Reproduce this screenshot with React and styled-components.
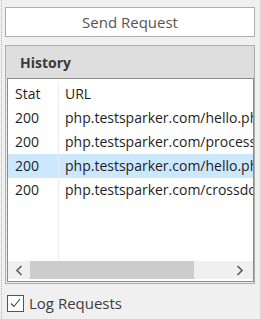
import React from "react";
import styled, { createGlobalStyle } from "styled-components";

const Global = createGlobalStyle`
  html, body { margin: 0; padding: 0; background: #f0f0f0; }
  body { font-family: "Open Sans", "Noto Sans", sans-serif; }
`;

const Frame = styled.div`
  box-sizing: border-box;
  height: 319px;
  border-left: 1px dotted #b8b8b8;
  border-right: 1px solid #d8d8d8;
  margin-left: 1px;
  width: 260px;
  padding: 7px 5px 0 3px;
  display: flex;
  flex-direction: column;
`;

const Button = styled.button`
  box-sizing: border-box;
  height: 30px;
  width: 250px;
  background: #fff;
  border: 1px solid #adadad;
  font-family: inherit;
  font-size: 15px;
  color: #555;
  padding: 0;
  margin: 0;
`;

const Panel = styled.section`
  box-sizing: border-box;
  margin-top: 8px;
  width: 250px;
  height: 239px;
  border: 1px solid #adadad;
  background: #f0f0f0;
  display: flex;
  flex-direction: column;
`;

const PanelHeader = styled.div`
  height: 32px;
  background: #dedede;
  display: flex;
  align-items: center;
  padding-left: 14px;
  font-weight: 700;
  font-size: 14px;
  color: #3a3a3a;
`;

const ListBox = styled.div`
  flex: 1;
  margin: 0 0 1px 1px;
  border: 1px solid #8a8a8a;
  background: #fff;
  display: flex;
  flex-direction: column;
  min-height: 0;
`;

const Body = styled.div`
  flex: 1;
  display: grid;
  grid-template-columns: 50px 1fr;
  padding-top: 3px;
  min-height: 0;
`;

const Column = styled.div`
  display: flex;
  flex-direction: column;
  min-width: 0;
  border-left: ${(p) => (p.$sep ? "1px solid #ececec" : "none")};
`;

const Cell = styled.div`
  height: 24px;
  line-height: 24px;
  padding-left: ${(p) => (p.$sep ? "6px" : "7px")};
  font-size: 14px;
  color: #1e1e1e;
  white-space: nowrap;
  overflow: hidden;
  background: ${(p) => (p.$selected ? "#cce8ff" : "transparent")};
`;

const ScrollBar = styled.div`
  height: 18px;
  margin-bottom: 2px;
  background: #f0f0f0;
  display: flex;
  align-items: center;
`;

const Arrow = styled.div`
  width: 22px;
  height: 18px;
  display: flex;
  align-items: center;
  justify-content: ${(p) => (p.$right ? "flex-start" : "center")};
  padding-left: ${(p) => (p.$right ? "5px" : "0")};
  box-sizing: border-box;
`;

const Track = styled.div`
  flex: 1;
  height: 18px;
  display: flex;
`;

const Thumb = styled.div`
  width: 164px;
  height: 18px;
  background: #cdcdcd;
`;

const Footer = styled.label`
  display: flex;
  align-items: center;
  gap: 5px;
  margin-top: 9px;
  margin-left: 2px;
  font-size: 15px;
  color: #3c3c3c;
`;

const Box = styled.span`
  box-sizing: border-box;
  width: 17px;
  height: 17px;
  border: 1px solid #555;
  background: #fff;
  display: flex;
  align-items: center;
  justify-content: center;
`;

const rows = [
  { s: "200", u: "php.testsparker.com/hello.php" },
  { s: "200", u: "php.testsparker.com/process.php" },
  { s: "200", u: "php.testsparker.com/hello.php", sel: true },
  { s: "200", u: "php.testsparker.com/crossdomain.xml" },
];

export default function App() {
  return (
    <>
      <Global />
      <Frame>
        <Button>Send Request</Button>
        <Panel>
          <PanelHeader>History</PanelHeader>
          <ListBox>
            <Body>
              <Column>
                <Cell>Stat</Cell>
                {rows.map((r, i) => (
                  <Cell key={i} $selected={r.sel}>{r.s}</Cell>
                ))}
              </Column>
              <Column $sep>
                <Cell $sep>URL</Cell>
                {rows.map((r, i) => (
                  <Cell key={i} $sep $selected={r.sel}>{r.u}</Cell>
                ))}
              </Column>
            </Body>
            <ScrollBar>
              <Arrow>
                <svg width="8" height="11" viewBox="0 0 8 11">
                  <path d="M6.5 1 L2 5.5 L6.5 10" fill="none" stroke="#606060" strokeWidth="1.7" />
                </svg>
              </Arrow>
              <Track>
                <Thumb />
              </Track>
              <Arrow $right>
                <svg width="8" height="11" viewBox="0 0 8 11">
                  <path d="M1.5 1 L6 5.5 L1.5 10" fill="none" stroke="#606060" strokeWidth="1.7" />
                </svg>
              </Arrow>
            </ScrollBar>
          </ListBox>
        </Panel>
        <Footer>
          <Box>
            <svg width="11" height="10" viewBox="0 0 11 10">
              <path d="M1 5.5 L4 8.5 L10 1" fill="none" stroke="#444" strokeWidth="1.1" />
            </svg>
          </Box>
          Log Requests
        </Footer>
      </Frame>
    </>
  );
}
